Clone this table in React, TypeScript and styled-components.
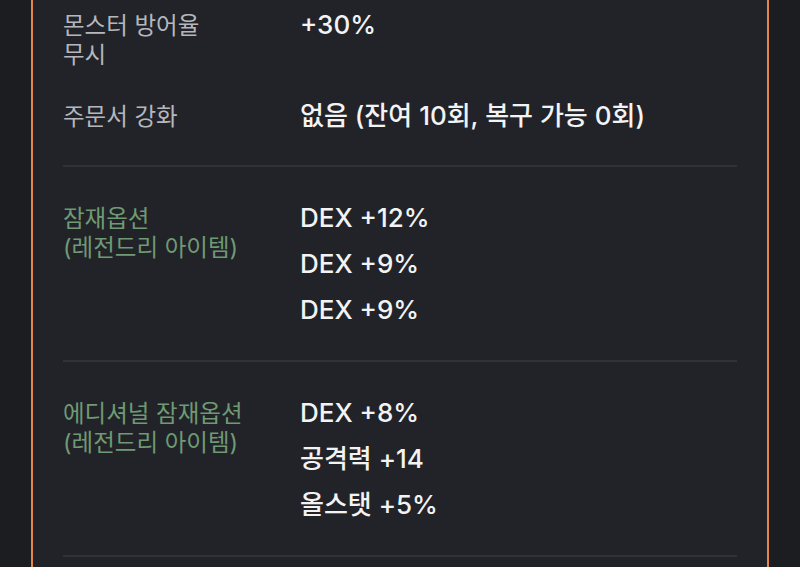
import styled, { createGlobalStyle } from 'styled-components';

interface Stat {
  label: string[];
  values: string[];
  accent?: boolean;
}

const basicStats: Stat[] = [
  {label: ['몬스터 방어율', '무시'], values: ['+30%']},
  {label: ['주문서 강화'], values: ['없음 (잔여 10회, 복구 가능 0회)']},
];

const potentialStats: Stat[] = [
  {
    label: ['잠재옵션', '(레전드리 아이템)'],
    values: ['DEX +12%', 'DEX +9%', 'DEX +9%'],
    accent: true,
  },
  {
    label: ['에디셔널 잠재옵션', '(레전드리 아이템)'],
    values: ['DEX +8%', '공격력 +14', '올스탯 +5%'],
    accent: true,
  },
];

function StatRow({label, values, accent}: Stat) {
  return (
    <Row>
      <Label accent={accent}>
        {label.map(line => (
          <div key={line}>{line}</div>
        ))}
      </Label>
      <Values>
        {values.map((value, i) => (
          <Value key={i}>{value}</Value>
        ))}
      </Values>
    </Row>
  );
}

export default function App() {
  return (
    <>
      <GlobalStyle />
      <Page>
        <Card>
          <BasicGroup>
            {basicStats.map(stat => (
              <StatRow key={stat.label[0]} {...stat} />
            ))}
          </BasicGroup>
          {potentialStats.map(stat => (
            <Section key={stat.label[0]}>
              <StatRow {...stat} />
            </Section>
          ))}
          <Section />
        </Card>
      </Page>
    </>
  );
}

const GlobalStyle = createGlobalStyle`
  html, body {
    margin: 0;
    padding: 0;
    background: #1c1d20;
    overflow: hidden;
  }
  body {
    font-family: Inter, "Noto Sans CJK KR", sans-serif;
    -webkit-font-smoothing: antialiased;
  }
`;

const Page = styled.div`
  padding: 0 31px;
  height: 567px;
  overflow: hidden;
`;

const Card = styled.div`
  background: #212329;
  border-left: 2px solid #e3874d;
  border-right: 2px solid #e3874d;
  padding: 2px 30px 80px;
`;

const BasicGroup = styled.div`
  display: flex;
  flex-direction: column;
  gap: 24px;
  padding-bottom: 26px;
`;

const Section = styled.div`
  border-top: 2px solid #30323a;
  padding: 28px 0 27px;
`;

const Row = styled.div`
  display: grid;
  grid-template-columns: 237px 1fr;
  align-items: start;
`;

const Label = styled.div<{accent?: boolean}>`
  padding-top: 9px;
  font-size: 23.5px;
  line-height: 29px;
  color: ${props => (props.accent ? '#6f9a73' : '#b5b7bd')};
`;

const Values = styled.div`
  display: flex;
  flex-direction: column;
`;

const Value = styled.div`
  font-size: 26px;
  line-height: 46px;
  font-weight: 500;
  color: #f3f3f4;
`;
